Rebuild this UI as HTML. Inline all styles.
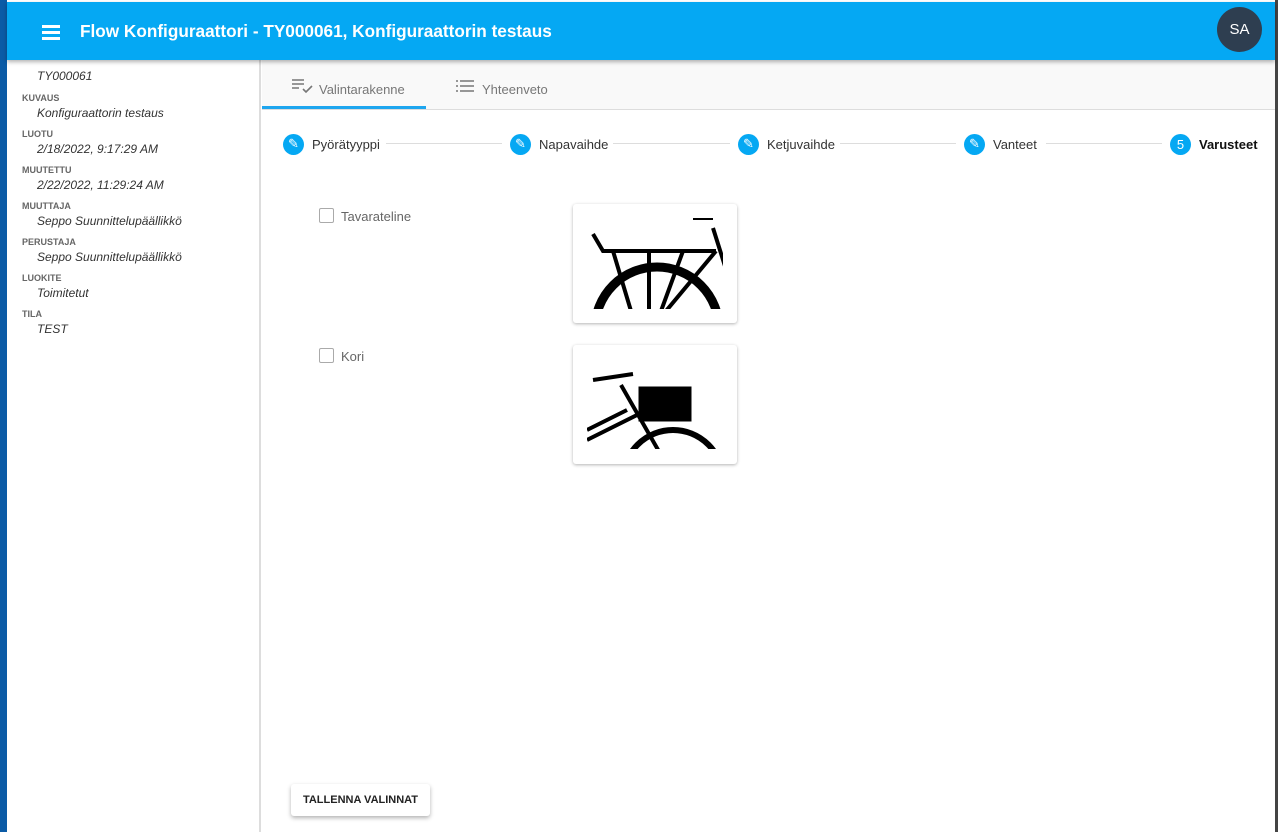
<!DOCTYPE html>
<html><head><meta charset="utf-8"><style>
*{box-sizing:border-box;margin:0;padding:0}
body{width:1278px;height:832px;overflow:hidden;background:#fff;font-family:"Liberation Sans",sans-serif;position:relative}
.lstrip{position:absolute;left:0;top:0;width:7px;height:832px;background:#0b5ba6}
.rstrip{position:absolute;right:0;top:0;width:3px;height:832px;background:#444}
.hdr{position:absolute;left:7px;top:2px;width:1268px;height:58px;background:#05a8f3;box-shadow:0 2px 4px rgba(0,0,0,.3);z-index:3}
.hdr .t{position:absolute;left:73px;top:19px;color:#fff;font-size:17.2px;font-weight:bold;letter-spacing:0}
.burger{position:absolute;left:35px;top:23px;width:18px}
.burger i{display:block;height:2.5px;background:#fff;margin-bottom:3.5px}
.av{position:absolute;left:1210px;top:5px;width:45px;height:45px;border-radius:50%;background:#2e3e50;color:#fff;font-size:15px;text-align:center;line-height:45px}
.side{position:absolute;left:7px;top:60px;width:254px;height:772px;background:#fff;border-right:2px solid #ddd}
.side .l{font-size:9px;font-weight:bold;color:#666;margin-left:15px;margin-top:5px;height:10px}
.side .v{font-size:12px;font-style:italic;color:#333;margin-left:30px;height:21px;line-height:21px}
.tabs{position:absolute;left:262px;top:60px;width:1013px;height:50px;background:#f9f9f9;border-bottom:1px solid #ddd}
.tab{position:absolute;top:22px;font-size:13px;color:#777}
.ul{position:absolute;left:0;top:46px;width:164px;height:3px;background:#1ea6ef}
.step{position:absolute;top:133px;height:22px;display:flex;align-items:center;font-size:13px;color:#333}
.dot{width:21px;height:21px;border-radius:50%;background:#05a8f3;color:#fff;display:flex;align-items:center;justify-content:center;font-size:13px;margin-right:8px}
.line{position:absolute;top:143px;height:1px;background:#ddd}
.cb{position:absolute;width:15px;height:15px;border:1.5px solid #aaa;border-radius:2px}
.lbl{position:absolute;font-size:13px;color:#666}
.card{position:absolute;left:573px;width:164px;height:119px;background:#fff;border-radius:3px;box-shadow:0 1px 3px rgba(0,0,0,.3)}
.btn{position:absolute;left:291px;top:784px;width:139px;height:32px;background:#fff;border-radius:3px;box-shadow:0 2px 4px rgba(0,0,0,.3);font-size:11px;font-weight:bold;color:#222;text-align:center;line-height:32px}
</style></head><body>
<div class="lstrip"></div><div class="rstrip"></div>
<div class="hdr"><div class="burger"><i></i><i></i><i></i></div><div class="t">Flow Konfiguraattori - TY000061, Konfiguraattorin testaus</div><div class="av">SA</div></div>
<div class="side">
<div class="v" style="margin-top:6px">TY000061</div>
<div class="l" style="margin-top:6px">KUVAUS</div><div class="v">Konfiguraattorin testaus</div>
<div class="l">LUOTU</div><div class="v">2/18/2022, 9:17:29 AM</div>
<div class="l">MUUTETTU</div><div class="v">2/22/2022, 11:29:24 AM</div>
<div class="l">MUUTTAJA</div><div class="v">Seppo Suunnittelupäällikkö</div>
<div class="l">PERUSTAJA</div><div class="v">Seppo Suunnittelupäällikkö</div>
<div class="l">LUOKITE</div><div class="v">Toimitetut</div>
<div class="l">TILA</div><div class="v">TEST</div>
</div>
<div class="tabs">
<svg style="position:absolute;left:30px;top:18px" width="22" height="16" viewBox="0 0 22 16" fill="none" stroke="#777" stroke-width="1.6"><path d="M0 2h12M0 6h12M0 10h7M11 11l3 3 6-6"/></svg>
<div class="tab" style="left:57px">Valintarakenne</div>
<svg style="position:absolute;left:194px;top:20px" width="18" height="12" viewBox="0 0 18 12" fill="none" stroke="#777" stroke-width="1.6"><path d="M0 1h2M4 1h14M0 6h2M4 6h14M0 11h2M4 11h14"/></svg>
<div class="tab" style="left:220px">Yhteenveto</div>
<div class="ul"></div>
</div>
<div class="line" style="left:386px;width:116px"></div>
<div class="line" style="left:613px;width:117px"></div>
<div class="line" style="left:840px;width:116px"></div>
<div class="line" style="left:1046px;width:116px"></div>
<div class="step" style="left:283px"><div class="dot">✎</div>Pyörätyyppi</div>
<div class="step" style="left:510px"><div class="dot">✎</div>Napavaihde</div>
<div class="step" style="left:738px"><div class="dot">✎</div>Ketjuvaihde</div>
<div class="step" style="left:964px"><div class="dot">✎</div>Vanteet</div>
<div class="step" style="left:1170px"><div class="dot">5</div><b style="color:#111">Varusteet</b></div>
<div class="cb" style="left:319px;top:208px"></div><div class="lbl" style="left:341px;top:209px">Tavarateline</div>
<div class="cb" style="left:319px;top:348px"></div><div class="lbl" style="left:341px;top:349px">Kori</div>
<div class="card" style="top:204px"><svg width="164" height="119" viewBox="0 0 164 119"><defs><clipPath id="c1"><rect x="15" y="14" width="135" height="91"/></clipPath></defs><g clip-path="url(#c1)" stroke="#000" fill="none"><circle cx="84" cy="125" r="62" stroke-width="9"/><path d="M20 30l10 17h113M40 47l18 60M76 47v60M110 47l-22 60M140 24l22 70M143 47l-50 60" stroke-width="4"/><path d="M120 14h20" stroke-width="4"/></g></svg></div>
<div class="card" style="top:345px"><svg width="164" height="119" viewBox="0 0 164 119"><defs><clipPath id="c2"><rect x="14" y="20" width="136" height="84"/></clipPath></defs><g clip-path="url(#c2)" stroke="#000" fill="none"><circle cx="100" cy="135" r="50" stroke-width="6"/><path d="M20 35l40-6M48 40l40 70M14 85l40-20M14 95l60-30" stroke-width="4"/><rect x="66" y="42" width="52" height="34" fill="#000"/></g></svg></div>
<div class="btn">TALLENNA VALINNAT</div>
</body></html>
